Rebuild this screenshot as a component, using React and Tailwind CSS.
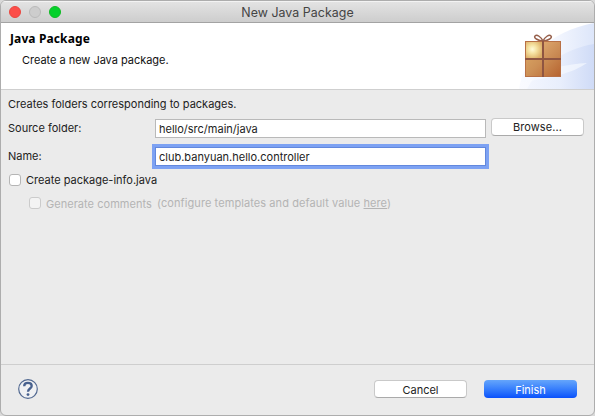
import React from "react";

function TitleBar() {
  return (
    <div className="flex h-[22px] shrink-0 items-center border-b border-[#a3a3a3] bg-linear-to-b from-[#e4e4e4] to-[#cdcdcd] shadow-[inset_0_1px_0_#f3f3f3]">
      <div className="flex w-[100px] gap-[8px] pl-[8px]">
        <span className="size-[12px] rounded-full border border-[#e9473f] bg-[#fc4e49]" />
        <span className="size-[12px] rounded-full border border-[#b9b9b9] bg-[#cdcdcd]" />
        <span className="size-[12px] rounded-full border border-[#0fba24] bg-[#05d02b]" />
      </div>
      <div className="flex-1 pt-[2px] text-center text-[12.4px] leading-[20px] tracking-[0.05px] text-[#444]">
        New Java Package
      </div>
      <div className="w-[100px]" />
    </div>
  );
}

function GiftIcon() {
  return (
    <svg width="76" height="66" viewBox="0 0 76 66" className="block">
      <defs>
        <linearGradient id="swoosh" x1="0" y1="0" x2="1" y2="0">
          <stop offset="0" stopColor="#fafbff" />
          <stop offset="0.5" stopColor="#f3f6fe" />
          <stop offset="1" stopColor="#dde6fa" />
        </linearGradient>
        <linearGradient id="swoosh2" x1="0" y1="0" x2="1" y2="0">
          <stop offset="0" stopColor="#f3f6fe" />
          <stop offset="0.5" stopColor="#e8eefc" />
          <stop offset="1" stopColor="#cfdbf7" />
        </linearGradient>
        <linearGradient id="box" x1="0" y1="0" x2="1" y2="1">
          <stop offset="0" stopColor="#dfad68" />
          <stop offset="0.5" stopColor="#cd9157" />
          <stop offset="1" stopColor="#b66330" />
        </linearGradient>
        <linearGradient id="light" x1="0" y1="0" x2="1" y2="1">
          <stop offset="0" stopColor="#dca56b" />
          <stop offset="1" stopColor="#c4824c" />
        </linearGradient>
        <radialGradient id="glow" cx="0.4" cy="0.45" r="0.65">
          <stop offset="0" stopColor="#fffbd9" />
          <stop offset="0.45" stopColor="#f4df9d" />
          <stop offset="1" stopColor="#dcae67" />
        </radialGradient>
      </defs>
      <path d="M1 66C5 36 32 8 76 0V66Z" fill="url(#swoosh)" />
      <path d="M9 66C20 45 45 26 76 21V66Z" fill="url(#swoosh2)" />
      <path d="M5 50C28 47 50 41 69 40C54 50 36 55 3 59Z" fill="#f8faff" opacity="0.65" />
      <g fill="none" stroke="#965f4b" strokeWidth="1.5">
        <path d="M25 18C21 18 15 15 17 13C19 11 23 14 25 18Z" />
        <path d="M25 18C29 18 35 15 33 13C31 11 27 14 25 18Z" />
      </g>
      <rect x="7.5" y="18.5" width="35" height="35" fill="url(#box)" stroke="#b87045" />
      <rect x="8" y="19" width="16" height="16" fill="url(#glow)" />
      <rect x="26" y="19" width="16" height="16" fill="url(#light)" />
      <path d="M25 18V54" stroke="#8f5541" strokeWidth="2" />
      <path d="M7 36H43" stroke="#8f5541" strokeWidth="2" />
    </svg>
  );
}

function Header() {
  return (
    <div className="flex h-[67px] shrink-0 justify-between border-b border-[#cfcfcf] bg-white">
      <div className="pt-[8px] pl-[9px]">
        <h1 className="font-['Noto_Sans','Open_Sans',sans-serif] text-[12px] leading-[16px] font-bold tracking-[0.12px] text-black">
          Java Package
        </h1>
        <p className="mt-[5px] pl-[12px] text-[11px] leading-[16px] tracking-[-0.03px] text-[#111]">
          Create a new Java package.
        </p>
      </div>
      <GiftIcon />
    </div>
  );
}

function Form() {
  return (
    <div className="flex flex-1 flex-col pl-[7px] text-[11px] leading-[16px] text-[#222]">
      <p className="pt-[6px] whitespace-nowrap">Creates folders corresponding to packages.</p>
      <div className="mt-[6px] flex h-[20px] items-start">
        <label className="w-[147px] pt-[2px]">Source folder:</label>
        <div className="mt-[1px] flex h-[19px] w-[331px] items-center border border-[#b9b9b9] bg-white pt-px pl-[3px]">
          hello/src/main/java
        </div>
        <button className="ml-[5px] flex h-[18px] w-[93px] items-center justify-center rounded-[4px] border border-[#c9c9c9] border-b-[#aaa] bg-white tracking-[0.1px]">
          Browse...
        </button>
      </div>
      <div className="mt-[9px] flex h-[19px] items-start">
        <label className="w-[147px] pt-[1px]">Name:</label>
        <div className="flex h-[19px] w-[331px] items-center border border-[#6288dd] bg-white pt-px pl-[3px] shadow-[0_0_0_3px_#7da2f3]">
          club.banyuan.hello.controller
        </div>
      </div>
      <div className="mt-[6px] flex h-[16px] items-center">
        <span className="ml-[1px] size-[12px] rounded-[3px] border border-[#b5b5b5] bg-white" />
        <span className="ml-[5px]">Create package-info.java</span>
      </div>
      <div className="mt-[7px] flex h-[16px] items-center text-[#b4b4b4]">
        <span className="ml-[21px] size-[12px] rounded-[3px] border border-[#cbcbcb] bg-[#f3f3f3]" />
        <span className="ml-[5px] w-[111px] pt-[1px] tracking-[0.04px] whitespace-nowrap">Generate comments</span>
        <span className="-mt-[1px] tracking-[0.08px] whitespace-nowrap">
          (configure templates and default value <a className="underline">here</a>)
        </span>
      </div>
    </div>
  );
}

function Footer() {
  return (
    <div className="flex h-[51px] shrink-0 items-start border-t border-[#cecece] pt-[14px] pl-[17px] text-[11px]">
      <svg width="20" height="20" viewBox="0 0 20 20" fill="none">
        <circle cx="10" cy="10" r="9.3" fill="#f0f1f3" stroke="#526991" strokeWidth="1.2" />
        <path d="M6.2 7.2C6.2 2.8 13.7 3 13.7 7C13.7 9.5 10 9.6 10 12.7" stroke="#48618e" strokeWidth="2.3" />
        <circle cx="10" cy="15.6" r="1.4" fill="#48618e" />
      </svg>
      <button className="mt-[1px] ml-[336px] flex h-[18px] w-[93px] items-center justify-center rounded-[4px] border border-[#c9c9c9] border-b-[#aaa] bg-white pt-[2px] text-[#222]">
        Cancel
      </button>
      <button className="mt-[1px] ml-[17px] flex h-[18px] w-[93px] items-center justify-center rounded-[4px] bg-linear-to-b from-[#65a5fb] to-[#0a50fb] pt-[2px] text-white">
        Finish
      </button>
    </div>
  );
}

export default function App() {
  return (
    <div className="h-[416px] w-[595px] bg-[#d9d9d9] font-['Inter','Liberation_Sans',sans-serif]">
      <div className="flex h-[416px] w-[595px] flex-col overflow-hidden rounded-[6px] border border-[#adadad] bg-[#ebebeb]">
        <TitleBar />
        <Header />
        <Form />
        <Footer />
      </div>
    </div>
  );
}
